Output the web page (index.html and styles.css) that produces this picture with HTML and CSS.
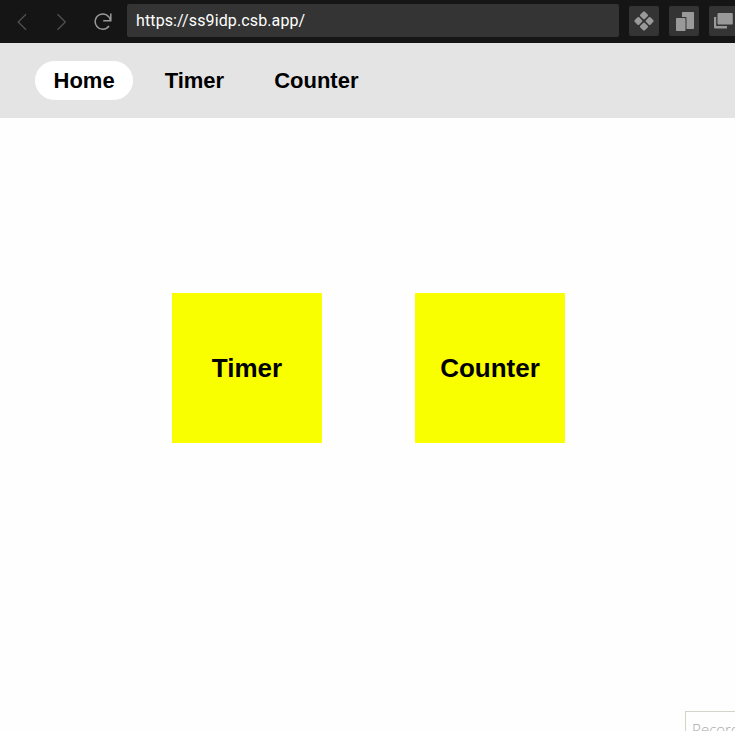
FILE: index.html
```html
<!DOCTYPE html>
<html lang="en">
<head>
<meta charset="utf-8">
<title>Home</title>
<link rel="stylesheet" href="styles.css">
</head>
<body>
<header class="browser">
  <div class="controls">
    <svg width="10" height="18" viewBox="0 0 10 18" fill="none" stroke="#505050" stroke-width="1.3"><path d="M9 1.2 1.2 9 9 16.8"/></svg>
    <svg width="10" height="18" viewBox="0 0 10 18" fill="none" stroke="#505050" stroke-width="1.3"><path d="M.5 1.2 8.3 9 .5 16.8"/></svg>
    <svg class="reload" width="18" height="18" viewBox="0 0 18 18" fill="none" stroke="#999" stroke-width="1.5"><path d="M16.8.5v7.3H9.2M16.3 7.5A7.6 7.6 0 1 0 15 13"/></svg>
  </div>
  <div class="address">https://ss9idp.csb.app/</div>
  <div class="tools">
    <button class="tool" aria-label="Components"><svg width="30" height="30" viewBox="0 0 30 30" fill="#999"><g transform="rotate(45 15 15)"><rect x="7.8" y="7.8" width="6.4" height="6.4" rx="1.2"/><rect x="15.8" y="7.8" width="6.4" height="6.4" rx="1.2"/><rect x="7.8" y="15.8" width="6.4" height="6.4" rx="1.2"/><rect x="15.8" y="15.8" width="6.4" height="6.4" rx="1.2"/></g></svg></button>
    <button class="tool" aria-label="Responsive preview"><svg width="30" height="30" viewBox="0 0 30 30" fill="#999"><path d="M13 6.7q0-.7.7-.7h10.6q.7 0 .7.7v15.6q0 .7-.7.7H17.5V11.7q0-.7-.7-.7H13z"/><rect x="7" y="12" width="9.5" height="13" rx=".7"/></svg></button>
    <button class="tool clipped" aria-label="Open in new window"><svg width="30" height="30" viewBox="0 0 30 30" fill="#999"><rect x="8.5" y="7" width="15.3" height="11.5" rx="1"/><path d="M5 11h2.2v9H18v2.4H6q-1 0-1-1z"/></svg></button>
  </div>
</header>
<nav class="nav">
  <a class="link active">Home</a>
  <a class="link">Timer</a>
  <a class="link">Counter</a>
</nav>
<main class="cards">
  <a class="card">Timer</a>
  <a class="card">Counter</a>
</main>
<div class="recorder">Record</div>
</body>
</html>
```
FILE: styles.css
```css
* { box-sizing: border-box; }
body {
  margin: 0;
  height: 731px;
  overflow: hidden;
  position: relative;
  background: #fefefe;
  color: #000;
  font-family: "Liberation Sans", Arial, sans-serif;
}
svg { display: block; flex: none; }
.browser {
  display: flex;
  height: 43px;
  background: #151515;
  overflow: hidden;
}
.controls {
  display: flex;
  flex: none;
  gap: 30px;
  width: 127px;
  padding: 13px 0 0 17px;
}
.reload { margin-left: -3px; }
.address {
  flex: none;
  width: 492px;
  height: 33px;
  margin-top: 4px;
  padding-left: 9px;
  border-radius: 2px;
  background: #343434;
  color: #fff;
  font: 16px/33px Roboto, sans-serif;
  letter-spacing: .12px;
}
.tools {
  display: flex;
  flex: none;
  gap: 10px;
  padding: 6px 0 0 10px;
}
.tool {
  flex: none;
  width: 30px;
  height: 30px;
  padding: 0;
  border: 0;
  border-radius: 2px;
  background: #343434;
}
.clipped {
  width: 26px;
  border-radius: 2px 0 0 2px;
  overflow: hidden;
}
.nav {
  display: flex;
  align-items: center;
  gap: 13px;
  height: 75px;
  padding-left: 35px;
  background: #e4e4e4;
}
.link {
  height: 39px;
  padding: 0 18.5px;
  border-radius: 20px;
  font-size: 22px;
  font-weight: bold;
  line-height: 39px;
}
.active { background: #fff; }
.cards {
  display: flex;
  justify-content: center;
  gap: 93px;
  padding: 175px 0 0 2px;
}
.card {
  display: flex;
  align-items: center;
  justify-content: center;
  width: 150px;
  height: 150px;
  background: #faff00;
  font-size: 26px;
  font-weight: bold;
}
.recorder {
  position: absolute;
  right: 0;
  bottom: 0;
  width: 50px;
  height: 20px;
  padding-left: 6px;
  border: solid #d5d2c8;
  border-width: 1px 0 0 1px;
  background: #fefefe;
  color: #aaa;
  overflow: hidden;
  font: 300 15px/34px "Open Sans", sans-serif;
}
```
